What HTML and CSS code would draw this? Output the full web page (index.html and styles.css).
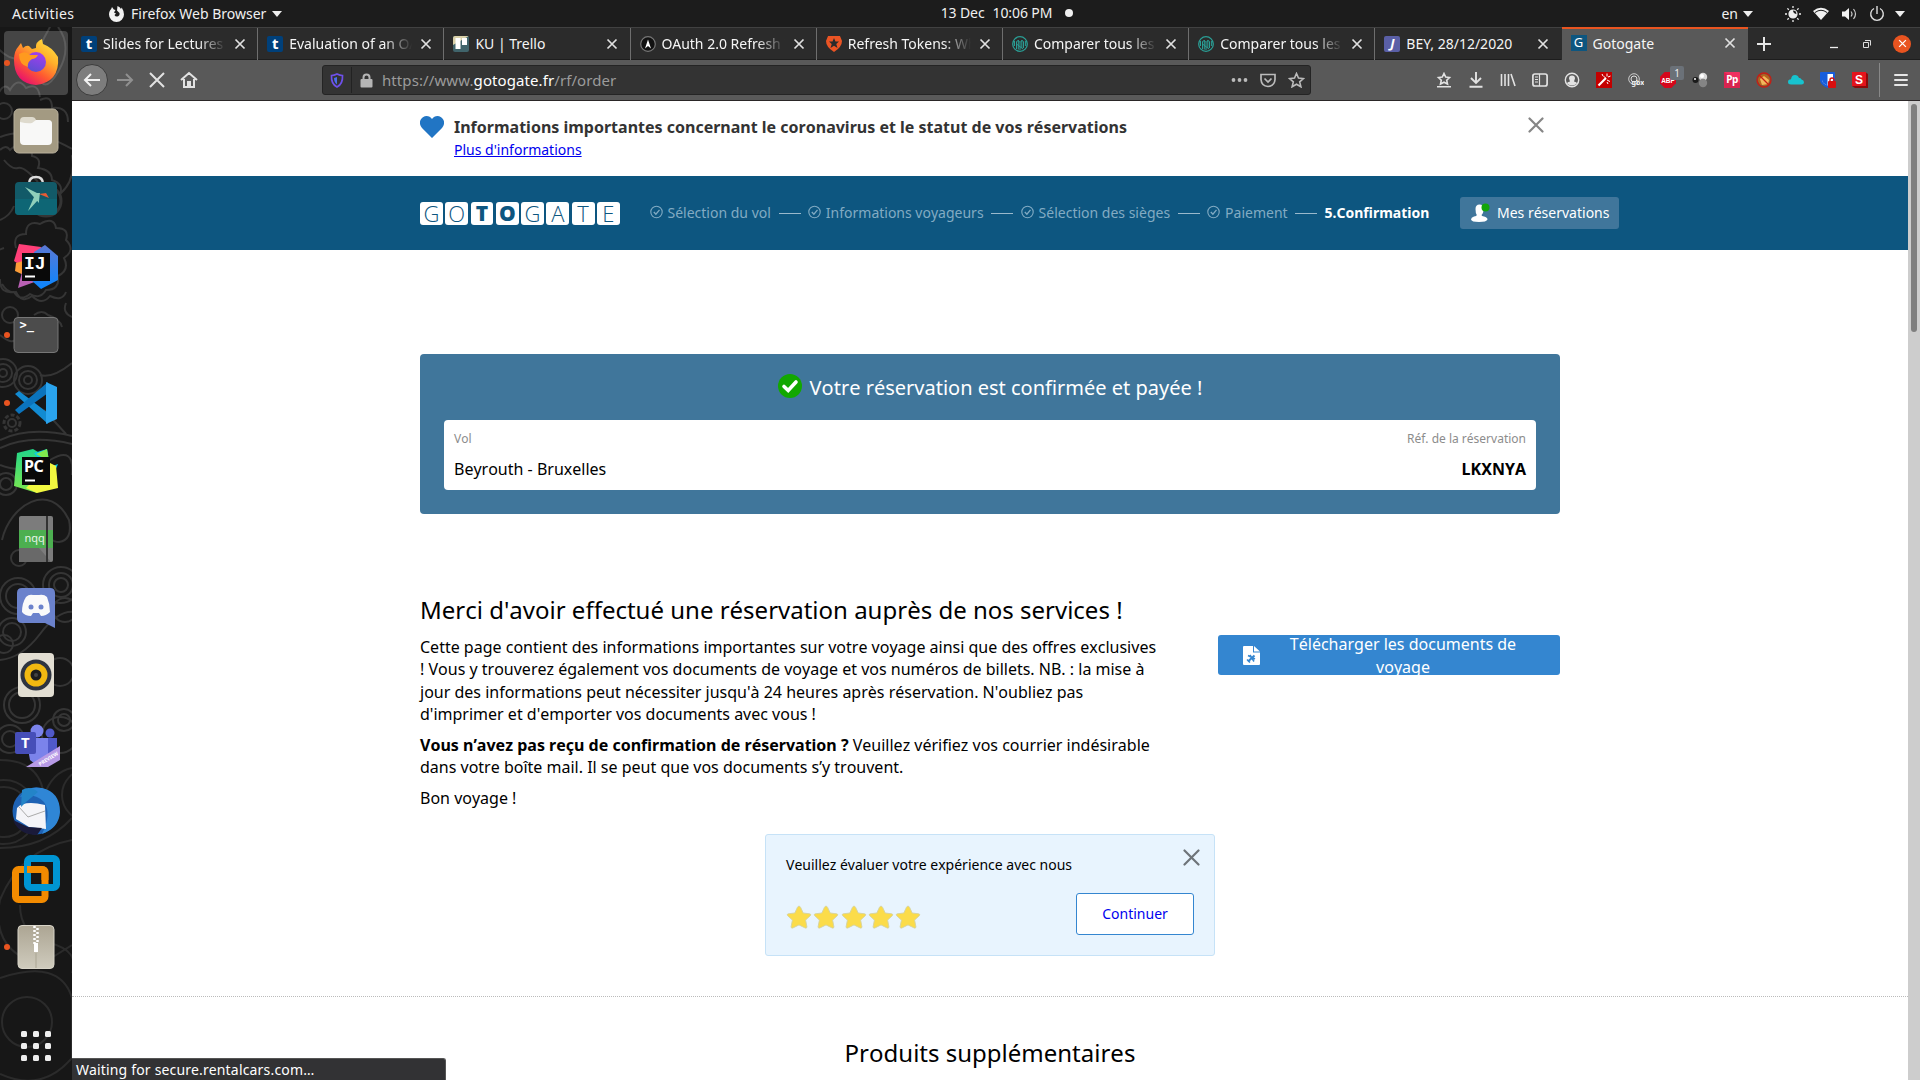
FILE: index.html
```html
<!DOCTYPE html>
<html lang="fr">
<head>
<meta charset="utf-8">
<title>Gotogate</title>
<link rel="stylesheet" href="styles.css">
</head>
<body>
<svg class="defs" width="0" height="0">
  <defs>
    <symbol id="x" viewBox="0 0 12 12"><path d="M1.5 1.5l9 9M10.5 1.5l-9 9" stroke="currentColor" stroke-width="1.7" fill="none"/></symbol>
    <symbol id="done" viewBox="0 0 13 14"><circle cx="6.5" cy="7" r="5.7" fill="none" stroke="currentColor" stroke-width="1.1"/><path d="M3.8 7l2.1 2.2 3.6-4.3" fill="none" stroke="currentColor" stroke-width="1.3"/></symbol>
    <symbol id="star" viewBox="0 0 26 25"><path d="M13 1.2q1 0 1.5 1l2.7 5.8 6.4.8q2 .4.7 1.9l-4.7 4.4 1.3 6.6q.1 1.9-1.7 1.3L13 19.9 6.8 23q-1.800.6-1.7-1.3l1.300-6.600L1.700 10.700Q.4 9.200 2.400 8.800l6.400-.8 2.700-5.800q.5-1 1.500-1z" fill="#fbdc4a" stroke="#d5d3a0" stroke-width=".9"/></symbol>
    <symbol id="globe" viewBox="0 0 16 16"><circle cx="8" cy="8" r="7.300" fill="none" stroke="#2a9d94" stroke-width="1.300"/><path d="M4.500 13V5.500Q6.500 3 8 6.500v7.500M8 6.500Q10 3 11.500 5.500V12M4.500 8L11 13M6.300 4v9.500M9.800 4v8M2.500 5v5M13.400 5v5" fill="none" stroke="#2a9d94" stroke-width="1"/></symbol>
    <linearGradient id="ffo" x1="1" y1="0" x2="0.300" y2="1"><stop offset="0" stop-color="#fff04a"/><stop offset=".4" stop-color="#ffb02a"/><stop offset=".7" stop-color="#ff5a30"/><stop offset="1" stop-color="#e8106e"/></linearGradient>
    <linearGradient id="ffp" x1="0.700" y1="0" x2="0.300" y2="1"><stop offset="0" stop-color="#a63df0"/><stop offset="1" stop-color="#5a4fd0"/></linearGradient>
    <linearGradient id="zip" x1="0" y1="0" x2="0" y2="1"><stop offset="0" stop-color="#aca593"/><stop offset="1" stop-color="#cfcbbd"/></linearGradient>
    <linearGradient id="ijr" x1="0" y1="0" x2="0" y2="1"><stop offset="0" stop-color="#5b78d4"/><stop offset="1" stop-color="#0a86ff"/></linearGradient>
    <linearGradient id="pcg" x1="0" y1="0" x2="0" y2="1"><stop offset="0" stop-color="#21d789"/><stop offset="1" stop-color="#7fe84e"/></linearGradient>
  </defs>
</svg>
<div class="desktop">
  <header class="topbar">
    <span class="activities">Activities</span>
    <span class="app">
      <svg width="17" height="18" viewBox="0 0 17 18"><path d="M8.500 17A7.500 7.500 0 0 1 1 9.500C1 7 2 5 3.200 4l.8-2 1.800 2.500L7.500 5 6 7.500 8 8.500 6.500 10q1 2 3 1.500 2.500-1 2-3.500L9 5.500 9.500 1Q12 2 13 4l.7-1.500Q16 6 16 9.500A7.500 7.500 0 0 1 8.500 17z" fill="#f2f2f2"/></svg>
      <span class="app-name">Firefox Web Browser</span><i class="caret"></i>
    </span>
    <span class="clock"><span>13 Dec</span><span>10:06 PM</span><i class="dot"></i></span>
    <span class="sys">
      <span class="lang">en</span><i class="caret"></i>
      <svg class="s1" width="16" height="16" viewBox="0 0 16 16"><circle cx="8" cy="8" r="4" fill="none" stroke="#eee" stroke-width="1.200"/><path d="M8 4a4 4 0 1 0 4 4Q8 8 8 4z" fill="#eee"/><path d="M8 0v2M8 14v2M0 8h2M14 8h2M2.400 2.400l1.400 1.400M12.200 12.200l1.400 1.400M2.400 13.600l1.400-1.400M12.200 3.800l1.400-1.400" stroke="#eee" stroke-width="1.300"/></svg>
      <svg class="s2" width="16" height="14" viewBox="0 0 16 14"><path d="M0 4Q8-2.500 16 4L8 13z" fill="#f2f2f2"/><path d="M2 5.500Q8 1 14 5.500" stroke="#1c1c1c" stroke-width="1" fill="none"/></svg>
      <svg class="s3" width="16" height="14" viewBox="0 0 16 14"><path d="M0 4.500h3L7 1v12L3 9.500H0z" fill="#f2f2f2"/><path d="M9 4.500q2 2.500 0 5M11.500 2q4 5 0 10" stroke="#ccc" stroke-width="1.200" fill="none"/></svg>
      <svg class="s4" width="16" height="16" viewBox="0 0 16 16"><path d="M5 2.500a6.300 6.300 0 1 0 6 0M8 0v8" stroke="#ddd" stroke-width="1.400" fill="none"/></svg>
      <i class="caret"></i>
    </span>
  </header>

  <div class="workspace">
    <nav class="dock">
      <svg class="ornament" width="72" height="1053" viewBox="0 27 72 1053" fill="none" stroke="#353535" stroke-width="2">
        <path d="M-5 45q25 30 48-5l8-15M58 27q15 20 0 45t-20 0M-4 98q8-18 14-8 8-14 16-2 12-6 14 9M40 100q12-6 12 8 16-2 16 14M0 137q30-12 72 12" />
        <circle cx="4" cy="111" r="8"/><path d="M0 150q6-6 10 0 8-8 12 0 10-4 10 6 10 2 6 12 14 2 14 12 12 4 8 14 16-14 12-38 6-6 14-2M4 160q8 10 14 8t20 14"/>
        <circle cx="46" cy="201" r="15" stroke-width="3"/><path d="M0 220q10-4 14-14M16 248q-4-14 10-14 0-14 14-10 14-8 16 4 14 0 10 12 10 10-2 18 6 12-6 18 2 14-12 14-6 10-16 4-10 8-16-2-14 2-14-12-12-4-4-16-6-12 8-16M2 284q6 10 14 8 6 12 16 4 10 10 18 0 12 6 16-4"/>
        <circle cx="10" cy="315" r="8"/><path d="M34 315q8-6 14 0 12 4 14 12M66 303q-4 10 6 14M0 335q12 10 16 4"/>
        <circle cx="3" cy="373" r="14"/><circle cx="3" cy="373" r="9"/><circle cx="3" cy="373" r="4"/><circle cx="28" cy="380" r="14"/><circle cx="28" cy="380" r="9"/><circle cx="28" cy="380" r="4"/><path d="M40 375q12 4 32-12M0 440q30-14 72-4M0 448q30-14 72-4M44 410l22 24"/>
        <circle cx="12" cy="423" r="8" stroke-width="3" stroke-dasharray="4 2"/><circle cx="12" cy="423" r="4"/><circle cx="6" cy="484" r="6"/><circle cx="6" cy="484" r="11"/><path d="M2 540C10 505 50 480 69 520q4 20-10 22-10 0-8-10M0 465q25 10 50-5t22 15"/><circle cx="19" cy="558" r="8"/>
        <circle cx="61" cy="585" r="7"/><circle cx="61" cy="585" r="12"/><circle cx="61" cy="585" r="18"/><circle cx="18" cy="596" r="18"/><circle cx="18" cy="596" r="12"/><circle cx="12" cy="632" r="9"/><circle cx="12" cy="632" r="14"/><circle cx="65" cy="610" r="12"/><path d="M0 660q22-2 40-26t34-22"/>
        <circle cx="4" cy="644" r="9"/><circle cx="22" cy="705" r="18"/><circle cx="22" cy="705" r="13"/><circle cx="64" cy="720" r="11"/><circle cx="64" cy="720" r="6"/><circle cx="60" cy="672" r="14"/><circle cx="10" cy="739" r="14"/><circle cx="10" cy="739" r="8"/><circle cx="60" cy="735" r="18"/>
        <g stroke="#2b2b2b"><circle cx="4" cy="812" r="32"/><circle cx="4" cy="812" r="25"/><circle cx="88" cy="795" r="26"/><path d="M0 760q40 0 44 36M44 796q8-24 28-28M0 848q45 0 72-30M72 840Q20 850 0 900q-10 50 40 65l32-20M20 905q0 30 30 38t22 30M0 978q60-20 72 20v60q-30 35-72 16"/><circle cx="27" cy="1022" r="25"/></g>
      </svg>
      <div class="launch active running"><svg width="72" height="68" viewBox="0 29 72 68"><path d="M14 60q0-9 4-13l3-4 2 5q3-3 6-2l3 3 4-1q-1-6 6-9l1 5q9 3 15 13 2 25-22 28-22-2-22-25z" fill="url(#ffo)"/><circle cx="36" cy="62" r="10" fill="url(#ffp)"/><path d="M19 54q7-4 11 1h8q-2 4-6 4-5 3-4 8-9-2-9-13z" fill="#ff9a1f"/></svg></div>
      <div class="launch"><svg width="72" height="68" viewBox="0 97 72 68"><rect x="14" y="109" width="44" height="44" rx="5" fill="#a39a82" stroke="#b8b09c"/><path d="M20 121q0-4 4-4h8q3 0 4 3h12q4 0 4 4v16H20z" fill="#dedacd"/><path d="M20 122q8 2 12 1l4-3h12q4 0 4 4v17q0 4-4 4H24q-4 0-4-4z" fill="#f8f8f7"/></svg></div>
      <div class="launch"><svg width="72" height="68" viewBox="0 165 72 68"><path d="M29 184q0-7 7-7t7 7" fill="none" stroke="#ddd" stroke-width="2.500"/><rect x="15" y="182" width="42" height="33" rx="4" fill="#125a68"/><path d="M15 199h42v12q0 4-4 4H19q-4 0-4-4z" fill="#0e6675"/><path d="M25 187l14 7v9zM28 211l6-14 4 3zM36 193h4l-1 8z" fill="#8ed0bb"/><path d="M39 194l7-1 3 5z" fill="#e95b34"/></svg></div>
      <div class="launch"><svg width="72" height="68" viewBox="0 233 72 68"><path d="M19 244l22 3-4 30-23-16z" fill="#ff3f78"/><path d="M16 263l14-4-2 18-13-6z" fill="#fa9c38"/><path d="M22 272l-4 16 22-8z" fill="#b960b4"/><path d="M34 252l11-7 13 11v24l-17 9-11-10z" fill="url(#ijr)"/><rect x="22" y="253" width="28" height="28" fill="#090909"/><text x="24" y="269" class="mono" fill="#fff">IJ</text><path d="M25 276.500h10" stroke="#fff" stroke-width="2"/></svg></div>
      <div class="launch running"><svg width="72" height="68" viewBox="0 301 72 68"><rect x="14" y="317.500" width="44" height="35" rx="4" fill="#4c4c4c" stroke="#777"/><text x="19.500" y="329" class="term" fill="#fff">&gt;_</text></svg></div>
      <div class="launch running"><svg width="72" height="68" viewBox="0 369 72 68"><path d="M15 394l4-3 29 22v11z" fill="#128bd2"/><path d="M15 410l4 4 29-21V382z" fill="#0b74bd"/><path d="M46 382l11 5v32l-11 5z" fill="#2aa4ee"/></svg></div>
      <div class="launch"><svg width="72" height="68" viewBox="0 437 72 68"><path d="M17 453l16-4 10 6-6 38-23-7z" fill="url(#pcg)"/><path d="M34 453l13-4 3 18 8-3-5 12z" fill="#0ccbe8"/><path d="M36 454l11-5 2 12z" fill="#7fe84e"/><path d="M26 488l24-25 6 3 2 22-21 5z" fill="#f2f840"/><rect x="22" y="457" width="28" height="28" fill="#090909"/><text x="24" y="472" class="pc" fill="#fff">PC</text><path d="M25 480.500h10" stroke="#fff" stroke-width="2"/></svg></div>
      <div class="launch"><svg width="72" height="68" viewBox="0 505 72 68"><rect x="19" y="516" width="34" height="46" rx="2" fill="#7c7c7c"/><path d="M19 548h20l12 14H19z" fill="#696969"/><path d="M19 530h34v18H19z" fill="#4caf50"/><path d="M47 516v46" stroke="#333" stroke-width="2"/><text x="24.500" y="542" class="nqq" fill="#e9f5e9">nqq</text></svg></div>
      <div class="launch"><svg width="72" height="68" viewBox="0 573 72 68"><path d="M22 588h28q5 0 5 5v35l-10-5H22q-5 0-5-5v-25q0-5 5-5z" fill="#6b82cc"/><path d="M26 597q3-3 7-2h6q5-1 8 2 3 7 3 15-4 4-9 4l-2-3h-6l-2 3q-6 0-9-4 0-9 4-15z" fill="#fafafa"/><circle cx="31" cy="607" r="2.500" fill="#6b82cc"/><circle cx="41" cy="607" r="2.500" fill="#6b82cc"/></svg></div>
      <div class="launch"><svg width="72" height="68" viewBox="0 641 72 68"><rect x="18" y="653" width="36" height="44" rx="4" fill="#e2ded2"/><circle cx="36" cy="675" r="15.500" fill="#2e3440"/><circle cx="36" cy="675" r="11.500" fill="#f1b911"/><circle cx="36" cy="675" r="5.500" fill="#1d1d1d"/><circle cx="36" cy="675" r="2" fill="#444"/></svg></div>
      <div class="launch"><svg width="72" height="68" viewBox="0 709 72 68"><circle cx="37" cy="731" r="6.500" fill="#7b83eb"/><circle cx="50" cy="733" r="4.500" fill="#5059c9"/><path d="M42 738h15v18H42z" fill="#5059c9"/><path d="M26 738h22v24q-10 6-18-2z" fill="#7b83eb"/><rect x="15" y="732" width="21" height="22" rx="2" fill="#464eb8"/><text x="21" y="748" class="teams" fill="#fff">T</text><path d="M26 767l34-21v14l-12 7z" fill="#b79ae6"/><text transform="translate(40 766) rotate(-32)" class="preview" fill="#fff">PREVIEW</text></svg></div>
      <div class="launch"><svg width="72" height="68" viewBox="0 777 72 68"><circle cx="36" cy="811" r="23.500" fill="#1e62b4"/><path d="M20 797q8-12 22-9 18 4 18 24-1 16-18 22 10-20 2-32-10-10-24-5z" fill="#2f86d6"/><path d="M17 808q7-8 28-3l1 24-17-2-13-8z" fill="#f4f4f8"/><path d="M19 807l9 10 17-6" fill="none" stroke="#aaa"/><path d="M13 820l15 7 14 1-5 7q-18 0-24-15z" fill="#1a1a3a"/><path d="M22 790q8-5 16 2l-12 10-5 5z" fill="#2384c8"/></svg></div>
      <div class="launch"><svg width="72" height="68" viewBox="0 845 72 68"><rect x="15.500" y="869.500" width="29.500" height="30" rx="3" fill="none" stroke="#f38b00" stroke-width="7"/><rect x="27.500" y="858.500" width="29" height="29" rx="3" fill="none" stroke="#0095d3" stroke-width="7"/><path d="M27 869.500h15q3 0 3 3V880" fill="none" stroke="#f38b00" stroke-width="7"/></svg></div>
      <div class="launch running"><svg width="72" height="68" viewBox="0 913 72 68"><rect x="18" y="925.500" width="36" height="43" rx="4" fill="url(#zip)" stroke="#d8d4c8"/><path d="M34.500 926v18M37.500 928v16" stroke="#fff" stroke-width="2.500" stroke-dasharray="2 2"/><path d="M34 943h4v9h-4z" fill="#fff"/><path d="M36 953v15" stroke="#aaa593"/></svg></div>
      <div class="apps"><svg width="30" height="30" viewBox="0 0 30 30" fill="#eee"><rect width="6" height="6" rx="1.500"/><rect x="12" width="6" height="6" rx="1.500"/><rect x="24" width="6" height="6" rx="1.500"/><rect y="12" width="6" height="6" rx="1.500"/><rect x="12" y="12" width="6" height="6" rx="1.500"/><rect x="24" y="12" width="6" height="6" rx="1.500"/><rect y="24" width="6" height="6" rx="1.500"/><rect x="12" y="24" width="6" height="6" rx="1.500"/><rect x="24" y="24" width="6" height="6" rx="1.500"/></svg></div>
    </nav>

    <main class="browser">
      <div class="tabs">
        <div class="tab"><b class="fav toledo">t</b><span class="title fade">Slides for Lectures</span><svg class="close"><use href="#x"/></svg></div>
        <div class="tab"><b class="fav toledo">t</b><span class="title fade">Evaluation of an OAuth</span><svg class="close"><use href="#x"/></svg></div>
        <div class="tab"><svg class="fav" viewBox="0 0 16 16"><rect width="16" height="16" fill="#40646b"/><path d="M0 0h16L0 9z" fill="#d9d0a8"/><rect x="2.500" y="2" width="5" height="11" fill="#fff"/><rect x="9" y="2" width="5" height="7" fill="#fff"/></svg><span class="title">KU | Trello</span><svg class="close"><use href="#x"/></svg></div>
        <div class="tab"><svg class="fav" viewBox="0 0 16 16"><circle cx="8" cy="8" r="7.300" fill="#111" stroke="#777" stroke-width="1.200"/><path d="M8 3.500l3 9-3-2.500-3 2.500z" fill="#fff"/></svg><span class="title fade">OAuth 2.0 Refresh T</span><svg class="close"><use href="#x"/></svg></div>
        <div class="tab"><svg class="fav" viewBox="0 0 16 16"><path d="M2 0h12l2 5q0 6-8 11Q0 11 0 5z" fill="#eb5424"/><path d="M8 2l1.500 3.500H13L10.300 8l1.200 4L8 9.800 4.500 12l1.200-4L3 5.500h3.500z" fill="#2b2b2b"/></svg><span class="title fade">Refresh Tokens: What</span><svg class="close"><use href="#x"/></svg></div>
        <div class="tab"><svg class="fav"><use href="#globe"/></svg><span class="title fade">Comparer tous les p</span><svg class="close"><use href="#x"/></svg></div>
        <div class="tab"><svg class="fav"><use href="#globe"/></svg><span class="title fade">Comparer tous les p</span><svg class="close"><use href="#x"/></svg></div>
        <div class="tab"><b class="fav jet">J</b><span class="title">BEY, 28/12/2020</span><svg class="close"><use href="#x"/></svg></div>
        <div class="tab current"><b class="fav goto">G</b><span class="title">Gotogate</span><svg class="close"><use href="#x"/></svg></div>
        <svg class="plus" width="16" height="16" viewBox="0 0 16 16"><path d="M8 1v14M1 8h14" stroke="#e6e6e6" stroke-width="2"/></svg>
        <div class="wm">
          <svg width="10" height="12" viewBox="0 0 10 12"><path d="M1 9.500h8" stroke="#eee" stroke-width="1.300"/></svg>
          <svg width="10" height="12" viewBox="0 0 10 12"><path d="M1.500 4.500h5v5h-5zM3 2.500h5.500v5" fill="none" stroke="#ddd"/></svg>
          <span class="quit"><svg width="9" height="9"><use href="#x"/></svg></span>
        </div>
      </div>

      <div class="toolbar">
        <span class="back"><svg width="18" height="18" viewBox="0 0 18 18"><path d="M17 9H2M8 3L2 9l6 6" fill="none" stroke="#f2f2f2" stroke-width="2"/></svg></span>
        <svg class="nav" width="18" height="18" viewBox="0 0 18 18"><path d="M1 9h15M10 3l6 6-6 6" fill="none" stroke="#909090" stroke-width="2"/></svg>
        <svg class="nav" width="18" height="18" viewBox="0 0 18 18"><path d="M2 2l14 14M16 2L2 16" fill="none" stroke="#e2e2e2" stroke-width="2"/></svg>
        <svg class="nav" width="18" height="18" viewBox="0 0 18 18"><path d="M1 9l8-7 8 7M4 8v8h10V8M8 16v-5h2v5" fill="none" stroke="#e2e2e2" stroke-width="2"/></svg>
        <div class="urlbar">
          <span class="shield"><svg width="14" height="15" viewBox="0 0 14 15"><path d="M7 1q3 1.500 5.500 1.500Q13 11 7 14 1 11 1.500 2.500 4 2.500 7 1z" fill="none" stroke="#6e50ea" stroke-width="1.700"/><path d="M7 4v7.500Q4 9 4 5z" fill="#4b6ef0"/></svg></span>
          <svg class="lock" width="13" height="15" viewBox="0 0 13 15"><path d="M3.500 7V4.500q0-3 3-3t3 3V7" fill="none" stroke="#b5b5b5" stroke-width="2"/><rect x=".5" y="6" width="12" height="8.500" rx="1" fill="#b5b5b5"/></svg>
          <span class="url">https://www.<span>gotogate.fr</span>/rf/order</span>
          <svg class="dots" width="17" height="6" viewBox="0 0 17 6" fill="#bbb"><circle cx="2.500" cy="3" r="1.900"/><circle cx="8.500" cy="3" r="1.900"/><circle cx="14.500" cy="3" r="1.900"/></svg>
          <svg class="pocket" width="16" height="15" viewBox="0 0 16 15"><path d="M1 1.500h14v5q-.5 6.500-7 7-6.500-.5-7-7zM4.500 5.500L8 9l3.500-3.500" fill="none" stroke="#bbb" stroke-width="1.700"/></svg>
          <svg width="17" height="16" viewBox="0 0 17 16"><path d="M8.500 1.500l2 4.600 5 .5-3.800 3.300 1.200 4.900-4.400-2.600-4.400 2.600 1.200-4.900L1.500 6.600l5-.5z" fill="none" stroke="#bbb" stroke-width="1.600"/></svg>
        </div>
        <div class="ext">
          <svg viewBox="0 0 16 16"><path d="M8 1.500l1.700 3.600 3.800.4-2.800 2.700.8 3.800L8 10.200 4.500 12l.8-3.800-2.800-2.700 3.800-.4zM1 14.800h14" fill="none" stroke="#e2e2e2" stroke-width="1.600"/></svg>
          <svg viewBox="0 0 16 16"><path d="M8 0v11M3 6l5 5 5-5M1.500 14.800h13" fill="none" stroke="#e2e2e2" stroke-width="1.900"/></svg>
          <svg viewBox="0 0 16 16"><path d="M1.500 2v12M5 2v12M8.500 2v12M11 2l4 12" fill="none" stroke="#e2e2e2" stroke-width="1.600"/></svg>
          <svg viewBox="0 0 16 16"><rect x=".9" y="2" width="14.200" height="12" rx="2" fill="none" stroke="#e2e2e2" stroke-width="1.700"/><path d="M7.500 2v12M3 5h3M3 7.500h3M3 10h3" stroke="#e2e2e2" stroke-width="1.200"/></svg>
          <svg viewBox="0 0 16 16"><circle cx="8" cy="8" r="6.700" fill="none" stroke="#e2e2e2" stroke-width="1.400"/><path d="M8 3.500q3 0 3 3L10 9.500q3 .5 3 2Q8 15.500 3 11.500q0-1.500 3-2L5 6.500q0-3 3-3z" fill="#e2e2e2"/></svg>
          <svg viewBox="0 0 16 16"><rect width="16" height="16" fill="#c40000"/><path d="M2.500 13.500L10 6" stroke="#fff" stroke-width="2.200"/><path d="M6 2l1 2M11 1.500v3M14.500 4l-2.500 1M11 8l3 1.500M12 12l-1-2M7.500 4.500l2 1" stroke="#fff"/></svg>
          <svg viewBox="0 0 16 16"><circle cx="6" cy="7" r="5.300" fill="none" stroke="#ccc"/><circle cx="6" cy="7" r="3" fill="none" stroke="#ddd"/><text x="3.500" y="13" class="gbx">gbx</text></svg>
          <span class="abp"><svg viewBox="0 0 16 16"><path d="M4.700 0h6.600L16 4.700v6.600L11.300 16H4.700L0 11.300V4.700z" fill="#d4071b"/><text x="8" y="10.600" class="abp-t">ABP</text></svg><b class="badge">1</b></span>
          <svg viewBox="0 0 16 16"><circle cx="3.500" cy="8" r="3" fill="#1b1b1b"/><circle cx="3" cy="7" r="1" fill="#fff"/><circle cx="11" cy="5" r="4.200" fill="#d9d9d9"/><circle cx="11" cy="11" r="4.200" fill="#858585"/><circle cx="10" cy="4" r="2" fill="#fff"/></svg>
          <svg viewBox="0 0 16 16"><rect width="16" height="16" rx="1" fill="#f03060"/><path d="M0 0l16 11v5H0z" fill="#d8244f"/><text x="8" y="11" class="pp">Pp</text></svg>
          <svg viewBox="0 0 16 16"><circle cx="8" cy="8" r="6" fill="#b5651d"/><path d="M4 7l4-3 5 4-1 4-6 1z" fill="#f2b75d"/><circle cx="8" cy="8" r="7" fill="none" stroke="#c81e12" stroke-width="1.300"/><path d="M3 3l10 10" stroke="#c81e12" stroke-width="1.200"/></svg>
          <svg viewBox="0 0 16 16"><path d="M3 12.500q-3 0-3-2.500t3-2.700Q3.500 3 7 3q3 0 4 3 2-.5 2.500 1.500Q16 8 16 10.300q0 2.200-2.500 2.200z" fill="#17c3cf"/></svg>
          <svg viewBox="0 0 16 16"><path d="M0 1q0-1 1-1h13q1 0 1 1v8q-1 4-7.500 7Q1 13 0 9z" fill="#175ddc"/><path d="M2 2h11v6q-.5 3-5.500 5.500Q2 11 2 8z" fill="#fff"/><path d="M2 2h5.500v11.500Q2 11 2 8z" fill="#175ddc"/><rect x="8" y="9" width="8" height="7" rx="1" fill="#d80f0f"/><path d="M10 9V8q0-2 2-2t2 2v1" fill="none" stroke="#d80f0f" stroke-width="1.400"/></svg>
          <svg viewBox="0 0 16 16"><path d="M13 0l3 2v14H3l-3-2z" fill="#8b0a0a"/><rect width="14" height="14" fill="#e4141c"/><text x="7" y="11.500" class="ess">S</text></svg>
        </div>
        <div class="menu"><svg width="14" height="14" viewBox="0 0 14 14"><path d="M1 2h12M1 7h12M1 12h12" stroke="#e6e6e6" stroke-width="2" stroke-linecap="round"/></svg></div>
      </div>

      <div class="viewport">
        <div class="page">
          <section class="notice">
            <div class="inner">
              <svg class="heart" width="24" height="22" viewBox="0 0 24 22"><path d="M12 22L2 12Q-1.500 7.500.8 3.500 3 0 6.500 0 10 0 12 3q2-3 5.500-3Q21 0 23.200 3.500 25.500 7.500 22 12z" fill="#2175c4"/></svg>
              <div class="notice-text"><strong>Informations importantes concernant le coronavirus et le statut de vos réservations</strong><a href="#">Plus d'informations</a></div>
              <svg class="dismiss" width="16" height="16" viewBox="0 0 16 16"><path d="M1.500 1.500l13 13M14.500 1.500l-13 13" stroke="#868686" stroke-width="2.200" stroke-linecap="round"/></svg>
            </div>
          </section>

          <section class="brandbar">
            <div class="logo"><i>G</i><i>O</i><i class="heavy">T</i><i class="heavy">O</i><i>G</i><i>A</i><i>T</i><i>E</i></div>
            <ol class="steps">
              <li><svg width="13" height="14"><use href="#done"/></svg>Sélection du vol</li>
              <li><svg width="13" height="14"><use href="#done"/></svg>Informations voyageurs</li>
              <li><svg width="13" height="14"><use href="#done"/></svg>Sélection des sièges</li>
              <li><svg width="13" height="14"><use href="#done"/></svg>Paiement</li>
              <li class="now">5.Confirmation</li>
            </ol>
            <a class="mine"><svg width="20" height="20" viewBox="0 0 20 20"><path d="M5.500 6q0-4.500 4-4.500t4 4.500-2 6q0 1 2.500 1.500 3.500.8 3.500 3Q16.500 19 9 19T1 16.500q0-2.200 3-3 2.800-.500 2.800-1.500-1.300-2-1.300-6z" fill="#fff"/><circle cx="15.500" cy="4.500" r="4" fill="#12a60a"/></svg><span>Mes réservations</span></a>
          </section>

          <section class="confirm">
            <h1><svg width="24" height="24" viewBox="0 0 24 24"><circle cx="12" cy="12" r="12" fill="#12a800"/><path d="M6 12.500l4.200 4L18 8" fill="none" stroke="#fff" stroke-width="3.600" stroke-linecap="round"/></svg>Votre réservation est confirmée et payée !</h1>
            <div class="trip">
              <div><small>Vol</small><span>Beyrouth - Bruxelles</span></div>
              <div class="right"><small>Réf. de la réservation</small><strong>LKXNYA</strong></div>
            </div>
          </section>

          <section class="thanks">
            <div class="copy">
              <h2>Merci d'avoir effectué une réservation auprès de nos services !</h2>
              <p>Cette page contient des informations importantes sur votre voyage ainsi que des offres exclusives ! Vous y trouverez également vos documents de voyage et vos numéros de billets. NB. : la mise à jour des informations peut nécessiter jusqu'à 24 heures après réservation. N'oubliez pas d'imprimer et d'emporter vos documents avec vous !</p>
              <p><strong>Vous n’avez pas reçu de confirmation de réservation ?</strong> Veuillez vérifiez vos courrier indésirable dans votre boîte mail. Il se peut que vos documents s’y trouvent.</p>
              <p>Bon voyage !</p>
            </div>
            <a class="download"><svg width="17" height="19" viewBox="0 0 17 19"><path d="M1 0h9v6.500h7V18q0 1-1 1H1q-1 0-1-1V1q0-1 1-1zM11 0l6 5.500h-6z" fill="#fff"/><path d="M5 15.500L11.500 9.500" stroke="#3486d0" stroke-width="2"/><path d="M5 9.500l7 3.500M7 9L11 15.500M4 13.500l3 3" stroke="#3486d0" stroke-width="1.500"/></svg><span>Télécharger les documents de voyage</span></a>
          </section>

          <section class="rating">
            <div class="rate-left"><p>Veuillez évaluer votre expérience avec nous</p>
              <div class="stars"><svg><use href="#star"/></svg><svg><use href="#star"/></svg><svg><use href="#star"/></svg><svg><use href="#star"/></svg><svg><use href="#star"/></svg></div></div>
            <div class="rate-right"><svg width="17" height="17" viewBox="0 0 17 17"><path d="M1.500 1.500l14 14M15.500 1.500l-14 14" stroke="#6e7479" stroke-width="2.200" stroke-linecap="round"/></svg><a class="continue">Continuer</a></div>
          </section>

          <section class="products"><h2>Produits supplémentaires</h2></section>
        </div>
        <div class="scrollbar"><i></i></div>
        <div class="status">Waiting for secure.rentalcars.com…</div>
      </div>
    </main>
  </div>
</div>
</body>
</html>
```
FILE: styles.css
```css
* { box-sizing: border-box; }
html, body { margin: 0; height: 100%; overflow: hidden; }
body { font-family: "Noto Sans", sans-serif; font-size: 16px; color: #000; background: #fff; }
svg { display: block; flex: none; }
.defs { position: absolute; }
h1, h2, p, ol { margin: 0; padding: 0; font-weight: 400; }
i { font-style: normal; }

.desktop { width: 1920px; height: 1080px; display: flex; flex-direction: column; overflow: hidden; }
.topbar { flex: none; height: 27px; background: #1c1c1c; color: #f0f0f0; display: grid; grid-template-columns: 98px 1fr auto 1fr; align-items: center; font-size: 14px; line-height: 27px; padding-right: 15px; white-space: nowrap; }
.activities { padding-left: 12px; letter-spacing: .4px; }
.app, .clock, .sys { display: flex; align-items: center; }
.app { padding-left: 10px; }
.app-name { margin: 0 6px 0 6px; }
.caret { border: 5px solid transparent; border-top: 6px solid #eee; border-bottom: 0; }
.clock { gap: 8px; padding-left: 11px; line-height: 25px; align-self: start; letter-spacing: -.1px; }
.dot { width: 8px; height: 8px; border-radius: 50%; background: #f0f0f0; margin-left: 5px; }
.sys { justify-content: flex-end; }
.lang { margin-right: 5px; }
.s1 { margin-left: 32px; }
.s2 { margin-left: 12px; }
.s3 { margin-left: 13px; }
.s4 { margin: 0 10px 0 11px; }

.workspace { flex: 1; display: flex; min-height: 0; }
.dock { width: 72px; flex: none; background: #171717; position: relative; display: flex; flex-direction: column; padding-top: 2px; overflow: hidden; }
.ornament { position: absolute; left: 0; top: 0; }
.launch { height: 68px; flex: none; position: relative; }
.launch svg { position: relative; }
.active::before { content: ""; position: absolute; left: 4px; top: 2px; width: 64px; height: 64px; border-radius: 4px; background: rgba(255,255,255,.2); }
.running::after { content: ""; position: absolute; left: 4px; top: 31px; width: 6px; height: 6px; border-radius: 50%; background: #e95420; }
.apps { padding: 50px 0 0 21px; position: relative; }
.mono { font: bold 18px "Liberation Mono", monospace; }
.term { font: bold 12px "DejaVu Sans Mono", monospace; }
.pc { font: bold 16px "Noto Sans", sans-serif; letter-spacing: -.5px; }
.nqq { font: 11px "Noto Sans", sans-serif; }
.teams { font: bold 15px "Noto Sans", sans-serif; }
.preview { font: bold 5px "Noto Sans", sans-serif; }

.browser { flex: 1; min-width: 0; display: flex; flex-direction: column; }
.tabs { height: 33px; flex: none; background: #2b2b2b; display: flex; align-items: center; border-top: 1px solid #414141; border-bottom: 1px solid #1d1d1d; color: #f5f5f5; font-size: 14px; }
.tab { width: 186.2px; height: 32px; flex: none; display: flex; align-items: center; padding-left: 9px; border-right: 1px solid #6e6e6e; }
.tab:nth-child(8) { border-right-color: #2b2b2b; }
.tab.current { background: #595959; border-right: 0; height: 33px; box-shadow: inset 0 2px #e95420; margin-top: -1px; }
.fav { width: 16px; height: 16px; flex: none; font-size: 13px; line-height: 15px; text-align: center; border-radius: 2px; color: #fff; }
.toledo { background: #00407a; font-size: 15px; line-height: 14px; }
.jet { background: #5a5fa6; font-style: italic; }
.goto { background: #0d5680; font-weight: 400; border-radius: 0; }
.title { width: 123px; margin-left: 6px; overflow: hidden; white-space: nowrap; }
.fade { -webkit-mask-image: linear-gradient(90deg, #000 95px, transparent 123px); mask-image: linear-gradient(90deg, #000 95px, transparent 123px); }
.close { width: 12px; height: 12px; margin-left: 8px; color: #e0e0e0; }
.plus { margin-left: 8px; }
.wm { margin-left: auto; display: flex; align-items: center; gap: 23px; padding-right: 9px; }
.quit { width: 18px; height: 18px; margin-left: -2px; border-radius: 50%; background: #e95420; color: #fff; display: grid; place-items: center; }

.toolbar { height: 41px; flex: none; background: #595959; border-bottom: 1px solid #2a2627; display: flex; align-items: center; }
.back { width: 32px; height: 32px; margin-left: 4px; border-radius: 50%; background: #7d7d7d; border: 1px solid #3c3c3c; display: grid; place-items: center; flex: none; }
.nav { margin-right: 14px; }
.back + .nav { margin-left: 8px; }
.urlbar { width: 989px; height: 30px; margin-left: 110px; background: #333; border: 1px solid #242424; border-radius: 3px; display: flex; align-items: center; flex: none; padding-right: 5px; }
.shield { width: 29px; height: 26px; border-right: 1px solid #222; display: flex; align-items: center; padding-left: 7px; }
.lock { margin-left: 8px; }
.url { margin-left: 9px; color: #9b9b9b; font-size: 15px; letter-spacing: .09px; }
.url span { color: #fff; }
.dots { margin-left: auto; }
.pocket { margin: 0 12px 0 12px; }
.ext { margin-left: auto; display: flex; gap: 16px; padding-right: 11px; }
.ext svg { width: 16px; height: 16px; }
.gbx { font: bold 7px "Noto Sans", sans-serif; fill: #eee; }
.abp { position: relative; }
.abp-t { font: bold 6.5px "Liberation Sans", sans-serif; fill: #fff; text-anchor: middle; }
.badge { position: absolute; left: 10px; top: -6px; width: 14px; height: 14px; background: #6b7178; border-radius: 2px; color: #eee; font-size: 10px; font-weight: 400; line-height: 14px; text-align: center; }
.pp { font: bold 10px "Noto Sans", sans-serif; fill: #fff; text-anchor: middle; letter-spacing: -.5px; }
.ess { font: bold 12px "Liberation Sans", sans-serif; fill: #fff; text-anchor: middle; }
.menu { width: 41px; height: 34px; border-left: 1px solid #888; display: grid; place-items: center; padding-left: 2px; }

.viewport { flex: 1; min-height: 0; display: flex; position: relative; overflow: hidden; }
.page { flex: 1; background: #fff; font-kerning: none; }
.scrollbar { width: 12px; background: #cdcdcd; padding: 3px; }
.scrollbar i { display: block; height: 228px; border-radius: 3px; background: #7f7f7f; }
.notice { height: 75px; }
.inner { width: 1140px; margin-left: 348px; padding-top: 14px; display: flex; align-items: flex-start; }
.heart { margin-top: 1px; }
.notice-text { width: 680px; margin-left: 10px; display: flex; flex-direction: column; align-items: flex-start; white-space: nowrap; }
.notice-text strong { line-height: 24px; color: #333; }
.notice-text a { font-size: 14px; line-height: 20px; color: #00e; text-decoration: underline; margin-top: 1px; }
.dismiss { margin: 2px 0 0 394px; }
.brandbar { height: 74px; background: #0d5680; display: flex; align-items: center; padding-left: 348px; }
.logo { display: flex; gap: 2.400px; width: 200px; flex: none; }
.logo i { width: 22.900px; height: 23px; background: #fff; border-radius: 3px; color: #0d5680; font: 300 22px/23px "Open Sans", sans-serif; text-align: center; }
.logo .heavy { font-weight: 800; font-size: 21px; }
.steps { list-style: none; display: flex; align-items: center; margin: -2px 0 0 29.500px; font-size: 14px; color: #82abc3; white-space: nowrap; width: 810.500px; }
.steps li { display: flex; align-items: center; }
.steps li svg { margin-right: 5px; }
.steps li:not(.now)::after { content: ""; width: 22px; height: 1px; background: #9ab9cc; margin: 3px 7.300px 0 7.700px; }
.steps .now { color: #fff; font-weight: 700; }
.mine { width: 159px; height: 32px; border-radius: 3px; background: #40769b; color: #fff; font-size: 14px; display: flex; align-items: center; gap: 7px; padding-left: 10px; white-space: nowrap; }
.mine span { margin-top: -2px; }
.confirm { width: 1140px; height: 160px; margin: 104px 0 0 348px; border-radius: 4px; background: #40769b; padding: 20px 24px 24px; }
.confirm h1 { display: flex; justify-content: center; height: 46px; gap: 8px; color: #fff; font-size: 20px; line-height: 28px; }
.trip { height: 70px; border-radius: 4px; background: #fff; display: flex; justify-content: space-between; padding: 10px 10px; }
.trip div { display: flex; flex-direction: column; }
.trip .right { align-items: flex-end; }
.trip small { font-size: 12px; line-height: 18px; color: #8c8c8c; }
.trip span, .trip strong { margin-top: 10px; line-height: 22px; }
.thanks { width: 1140px; margin: 79px 0 0 348px; display: flex; justify-content: space-between; align-items: flex-start; }
.copy { width: 740px; }
.copy h2 { font-size: 24px; line-height: 34px; margin-bottom: 9px; white-space: nowrap; }
.copy p { line-height: 22.400px; margin-bottom: 8.400px; }
.download { width: 342px; height: 40px; margin-top: 42px; overflow: hidden; border-radius: 3px; background: #3486d0; color: #fff; display: flex; align-items: center; padding-left: 25px; line-height: 22.400px; text-align: center; }
.download span { width: 260px; margin: 1px 0 0 13px; }
.rating { width: 450px; height: 122px; margin: 16px 0 0 693px; border: 1px solid #c6e2f7; border-radius: 3px; background: #e8f4fe; display: flex; justify-content: space-between; padding: 14px 14px 0 20px; }
.rate-left p { font-size: 14px; line-height: 20px; margin-top: 6px; }
.stars { display: flex; gap: 1.250px; margin-top: 30px; }
.stars svg { width: 26px; height: 25px; }
.rate-right { display: flex; flex-direction: column; align-items: flex-end; }
.continue { width: 118px; height: 42px; margin: 27px 6px 0 0; border: 1px solid #3486d0; border-radius: 3px; background: #fff; color: #00e; font-size: 14px; line-height: 40px; text-align: center; }
.products { margin-top: 40px; border-top: 1px dotted #bbb; padding-top: 39px; text-align: center; }
.products h2 { font-size: 24px; line-height: 34px; }
.status { position: absolute; left: 0; bottom: 0; width: 374px; height: 22px; background: #323234; border-top: 1px solid #555; border-right: 1px solid #555; border-radius: 0 3px 0 0; color: #fff; font-size: 14px; line-height: 22px; padding-left: 4px; white-space: nowrap; letter-spacing: .18px; }
```
